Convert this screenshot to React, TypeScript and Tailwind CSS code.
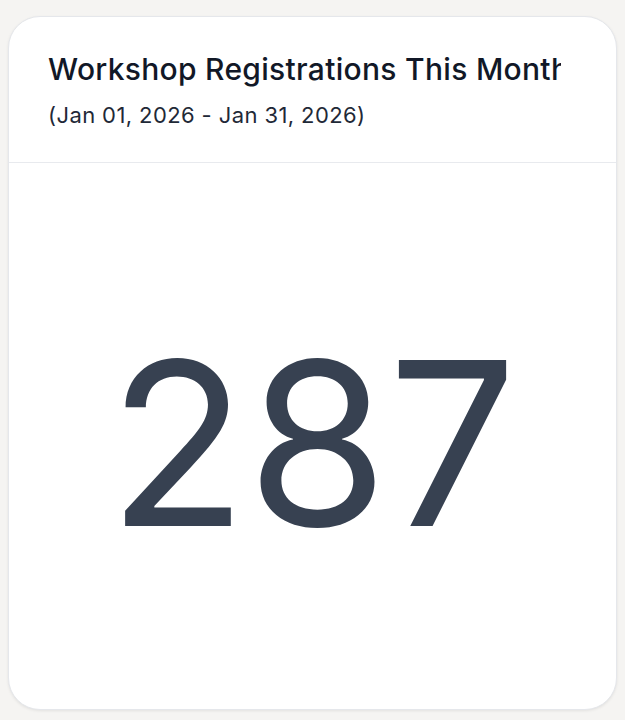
export default function App() {
  return (
    <div
      className="min-h-[720px] w-[625px] bg-[#f5f4f2] px-2 pt-4 pb-[10px]"
      style={{ fontFamily: 'Inter, "Noto Sans", sans-serif' }}
    >
      <div className="flex h-[694px] flex-col overflow-hidden rounded-[32px] border border-[#e5e7eb] bg-white shadow-[0_1px_3px_rgba(0,0,0,0.08)]">
        {/* Header */}
        <div className="h-[146px] shrink-0 border-b border-[#e8eaee] pl-[39px] pr-[55px] pt-[33px]">
          <div className="overflow-hidden whitespace-nowrap text-[30px] font-medium leading-[38px] tracking-[0.3px] text-[#111827]">
            Workshop Registrations This Month
          </div>
          <div className="mt-[13px] text-[22px] leading-[28px] tracking-[0.4px] text-[#1f2937]">
            (Jan 01, 2026 - Jan 31, 2026)
          </div>
        </div>

        {/* Metric */}
        <div className="flex flex-1 items-center justify-center pt-[14px]">
          <span className="text-[228px] leading-none font-normal text-[#374151]">287</span>
        </div>
      </div>
    </div>
  );
}
